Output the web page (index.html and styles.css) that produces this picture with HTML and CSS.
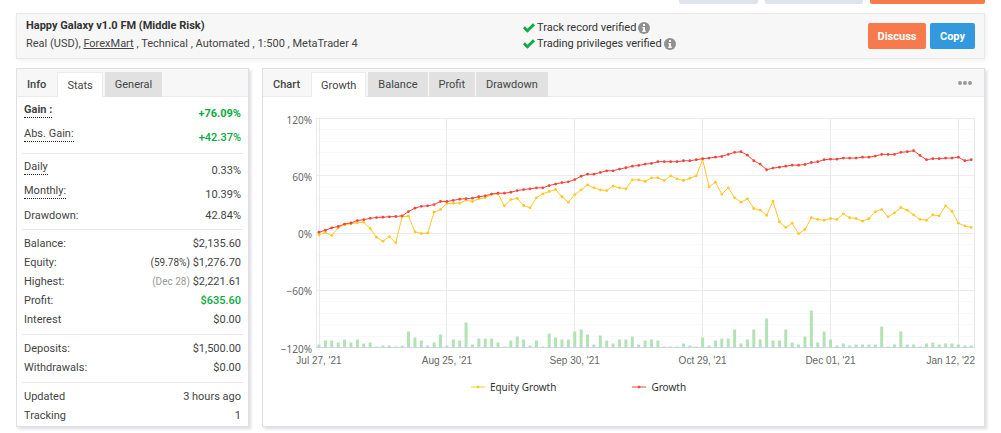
FILE: index.html
```html
<!DOCTYPE html>
<html lang="en">
<head>
<meta charset="utf-8">
<title>Happy Galaxy v1.0 FM (Middle Risk)</title>
<link rel="stylesheet" href="styles.css">
</head>
<body>
<div class="page">
  <div class="toolbar">
    <span class="tool tool-small"></span>
    <span class="tool tool-medium"></span>
    <span class="tool tool-large"></span>
  </div>

  <header class="summary">
    <div class="account">
      <h1 class="title">Happy Galaxy v1.0 FM (Middle Risk)</h1>
      <p class="details">Real (USD), <a class="broker" href="#">ForexMart</a> , Technical , Automated , 1:500 , MetaTrader 4</p>
    </div>
    <ul class="checks">
      <li class="check">
        <svg class="tick" viewBox="0 0 12 10"><path d="M0 5.3 1.9 3.3 4.4 5.8 10 .3 12 2.2 4.4 9.7z"/></svg>
        Track record verified
        <svg class="info" viewBox="0 0 12 12"><circle cx="6" cy="6" r="6"/><path d="M5 2h2v2H5zM4.3 5H7v3.6h.8V10H4.2V8.600H5V6.300h-.7z"/></svg>
      </li>
      <li class="check">
        <svg class="tick" viewBox="0 0 12 10"><path d="M0 5.3 1.9 3.3 4.4 5.8 10 .3 12 2.2 4.4 9.7z"/></svg>
        Trading privileges verified
        <svg class="info" viewBox="0 0 12 12"><circle cx="6" cy="6" r="6"/><path d="M5 2h2v2H5zM4.3 5H7v3.6h.8V10H4.2V8.600H5V6.300h-.7z"/></svg>
      </li>
    </ul>
    <div class="actions">
      <button class="button discuss" type="button">Discuss</button>
      <button class="button copy" type="button">Copy</button>
    </div>
  </header>

  <main class="panels">
    <section class="panel stats">
      <div class="tabs">
        <h2 class="tabs-title">Info</h2>
        <button class="tab active" type="button">Stats</button>
        <button class="tab" type="button">General</button>
      </div>
      <div class="groups">
        <dl class="group snug">
          <div class="row tall strong"><dt class="hint">Gain :</dt><dd class="gain">+76.09%</dd></div>
          <div class="row tall"><dt class="hint">Abs. Gain:</dt><dd class="gain">+42.37%</dd></div>
        </dl>
        <dl class="group snug">
          <div class="row tall"><dt class="hint">Daily</dt><dd>0.33%</dd></div>
          <div class="row tall"><dt class="hint">Monthly:</dt><dd>10.39%</dd></div>
          <div class="row"><dt>Drawdown:</dt><dd>42.84%</dd></div>
        </dl>
        <dl class="group">
          <div class="row"><dt>Balance:</dt><dd>$2,135.60</dd></div>
          <div class="row"><dt>Equity:</dt><dd><span class="share">(59.78%)</span> $1,276.70</dd></div>
          <div class="row"><dt>Highest:</dt><dd><span class="date">(Dec 28)</span> $2,221.61</dd></div>
          <div class="row"><dt>Profit:</dt><dd class="gain">$635.60</dd></div>
          <div class="row"><dt>Interest</dt><dd>$0.00</dd></div>
        </dl>
        <dl class="group">
          <div class="row"><dt>Deposits:</dt><dd>$1,500.00</dd></div>
          <div class="row"><dt>Withdrawals:</dt><dd>$0.00</dd></div>
        </dl>
        <dl class="group">
          <div class="row"><dt>Updated</dt><dd>3 hours ago</dd></div>
          <div class="row"><dt>Tracking</dt><dd>1</dd></div>
        </dl>
      </div>
    </section>

    <section class="panel chart">
      <div class="tabs">
        <h2 class="tabs-title">Chart</h2>
        <button class="tab active" type="button">Growth</button>
        <button class="tab" type="button">Balance</button>
        <button class="tab" type="button">Profit</button>
        <button class="tab" type="button">Drawdown</button>
        <button class="more" type="button"><svg class="dots" viewBox="0 0 14 4"><circle cx="2" cy="2" r="2"/><circle cx="7" cy="2" r="2"/><circle cx="12" cy="2" r="2"/></svg></button>
      </div>
      <svg class="plot" id="plot" viewBox="0 0 721 276"></svg>
      <div class="legend">
        <span class="key"><svg class="key-mark equity" viewBox="0 0 14 6"><path d="M0 3h14"/><circle cx="7" cy="3" r="1"/></svg>Equity Growth</span>
        <span class="key"><svg class="key-mark growth" viewBox="0 0 14 6"><path d="M0 3h14"/><circle cx="7" cy="3" r="1"/></svg>Growth</span>
      </div>
    </section>
  </main>
</div>
<script src="chart.js"></script>
</body>
</html>
```

FILE: styles.css
```css
* { box-sizing: border-box; }

body {
  margin: 0;
  background: #fff;
  color: #444;
  font-family: Roboto, "Liberation Sans", sans-serif;
  font-size: 11px;
}

h1, h2, p, ul, dl, dd { margin: 0; padding: 0; }

button { font: inherit; border: 0; padding: 0; cursor: pointer; }

.page { padding: 0 16px 6px; }

.toolbar { display: flex; justify-content: flex-end; gap: 7px; }
.tool { height: 4px; border-radius: 0 0 2px 2px; background: #dfe4ec; }
.tool-small { width: 79px; }
.tool-medium { width: 98px; }
.tool-large { width: 115px; background: #f67a4b; }

.summary {
  display: flex;
  align-items: center;
  margin-top: 9px;
  padding: 3px 9px;
  background: #f7f7f7;
  border: 1px solid #e9e9e9;
  box-shadow: 1px 1px 4px #eeeef2;
}
.account { flex: 0 0 497px; padding-bottom: 2px; }
.title { font-size: 11px; line-height: 18px; font-weight: 700; color: #333; }
.details { line-height: 18px; }
.broker { color: inherit; }

.checks { list-style: none; line-height: 16px; color: #333; }
.check { display: flex; align-items: center; gap: 2px; }
.tick { width: 12px; height: 10px; fill: #0aab40; }
.info { width: 12px; height: 12px; fill: #909090; }
.info path { fill: #f7f7f7; }

.actions { display: flex; gap: 4px; margin-left: auto; }
.button {
  height: 26px;
  border-radius: 2px;
  color: #fff;
  font-weight: 700;
}
.discuss { width: 58px; background: #f67a4b; }
.copy { width: 45px; background: #3399de; }

.panels { display: flex; gap: 13px; margin-top: 9px; }
.panel {
  background: #fff;
  border: 1px solid #e0e0e4;
  box-shadow: 2px 2px 3px #dcdce4;
}
.stats { flex: 0 0 233px; }
.chart { flex: 1; min-width: 0; }

.tabs {
  display: flex;
  align-items: flex-end;
  height: 28px;
  background: #f7f7f7;
  border-bottom: 1px solid #ebebeb;
}
.tabs-title {
  align-self: stretch;
  padding: 0 11px 0 10px;
  font-size: 11px;
  line-height: 31px;
  font-weight: 500;
}
.tab {
  height: 25px;
  margin-right: 1px;
  margin-bottom: -1px;
  padding: 0 10px;
  background: #e1e1e1;
  color: #444;
}
.tab.active {
  padding: 0 9px;
  margin-right: 2px;
  background: #fff;
  border: 1px solid #ebebeb;
  border-bottom: 0;
}
.more { align-self: center; display: flex; margin-left: auto; margin-right: 12px; background: none; }
.dots { width: 14px; height: 4px; fill: #9a9a9a; }

.groups { padding: 0 5px; }
.group { padding: 4px 2px 5px; }
.group.snug { padding-bottom: 4px; }
.group + .group { border-top: 1px solid #e9e9e9; }
.group:last-child { padding-bottom: 1px; }
.row {
  display: flex;
  justify-content: space-between;
  align-items: center;
  line-height: 19px;
}
.row.tall { height: 24px; }
.hint {
  align-self: flex-start;
  margin-top: 2px;
  line-height: 14px;
  border-bottom: 1px dotted #222;
}
.strong { font-weight: 700; }
.gain { color: #0aab40; }
.row:not(.strong) .gain { font-weight: 500; }
.share { font-size: 10px; }
.date { font-size: 10px; color: #999; }

.plot { display: block; width: 100%; }
.axis-y { font: 10px "Noto Sans", sans-serif; fill: #666; text-anchor: end; }
.axis-x { font: 10px "Liberation Sans", sans-serif; fill: #666; text-anchor: middle; }
.axis-x.last { text-anchor: end; }
.minor { stroke: #f8f8f8; }
.major { stroke: #ebebeb; }
.base { stroke: #ccd6eb; }
.bar { fill: #b3e2b5; }
.line { fill: none; stroke-width: 1; }
.line.growth { stroke: #f4453c; }
.line.equity { stroke: #ffc828; }
.dot.growth { fill: #f4453c; }
.dot.equity { fill: #ffc828; }

.legend {
  display: flex;
  justify-content: center;
  gap: 76px;
  margin-top: 6px;
  padding-right: 90px;
  font: 10px/16px "Noto Sans", sans-serif;
  color: #333;
}
.key { display: flex; align-items: center; gap: 5px; }
.key-mark { width: 14px; height: 6px; }
.key-mark.equity { stroke: #ffc828; fill: #ffc828; }
.key-mark.growth { stroke: #f4453c; fill: #f4453c; }
```

FILE: chart.js
```js
const growth = [
  0.8, 2.9, 5.4, 6.8, 9.4, 10.5, 13, 14, 15.4, 16.2, 16.6, 17, 17.3, 18, 22.5, 26, 28, 28.5, 29.8, 33,
  33, 34.2, 35.5, 36, 36.5, 38, 39, 40.8, 41.7, 41.7, 42.7, 44.5, 45.5, 46.3, 47.3, 47.3, 49.7, 51.3, 52.8, 53.6,
  56, 59.5, 61.6, 61.6, 63.5, 65.2, 65.2, 67, 68.4, 70, 70.8, 72.2, 72.9, 74.7, 74.7, 74.7, 74.7, 75.7, 75.7, 76.8,
  77.9, 78.5, 79.5, 80.3, 82.4, 84.5, 85.2, 81.6, 75.7, 72.2, 66.3, 68, 69, 70, 71.1, 71.1, 71.8, 73.9, 74.7, 76.8,
  77.4, 77.4, 78.5, 78.5, 78.5, 79.5, 79.5, 80.6, 82.4, 82.4, 82.4, 84.5, 85.2, 86.3, 81.3, 76.8, 77.9, 77.9, 78.5, 78.5,
  79.5, 75.7, 76.8
];

const equity = [
  -2, 0.5, -2.6, 5.4, 8.9, 9.6, 10.7, 11.3, 4.7, -4.4, -8.6, -3.7, -10.3, 17, 17.6, 1.3, -0.5, -0.2, 21.8, 24.6,
  31, 31.2, 31.2, 34.4, 33, 35.8, 36.9, 40.6, 41, 28.5, 35, 36.2, 28.8, 26.4, 36.9, 41, 43.5, 45.6, 38, 32.3,
  40.3, 45.2, 50.5, 47.3, 45.2, 44.5, 49.2, 47.3, 46.3, 55.7, 55.7, 54, 57.8, 57.8, 55, 59.9, 56.8, 55, 57.4, 59.9,
  76.8, 48.4, 53.2, 40.6, 47.3, 36.9, 32.3, 35.8, 25.7, 23.9, 18.6, 33.4, 11.7, 5.8, 10.3, -0.9, 3.7, 16, 14.2, 13.4,
  15.2, 14.2, 20.1, 16, 15.2, 12.4, 15.2, 22.2, 24.6, 17, 21.1, 26.7, 23.9, 19, 14.2, 13.4, 19, 18, 28.5, 22.8,
  10.3, 7.5, 5.8
];

const lots = [
  3, 7, 7, 5, 8, 5, 8, 4, 5, 1, 2, 2, 1, 2, 16, 10, 7, 2, 5, 13,
  2, 8, 7, 25, 3, 9, 9, 9, 5, 1, 7, 11, 8, 2, 7, 1, 14, 10, 8, 8,
  16, 18, 13, 3, 12, 7, 4, 8, 8, 11, 3, 7, 8, 7, 1, 1, 1, 4, 2, 1,
  10, 2, 7, 9, 9, 18, 4, 8, 18, 8, 29, 7, 7, 18, 5, 3, 11, 37, 5, 16,
  8, 2, 4, 2, 3, 3, 3, 3, 21, 1, 3, 16, 3, 3, 1, 4, 5, 3, 4, 4,
  3, 2, 2
];

const dates = ["Jul 27, '21", "Aug 25, '21", "Sep 30, '21", "Oct 29, '21", "Dec 01, '21", "Jan 12, '22"];

const area = { left: 53, right: 712, top: 21.5, bottom: 250.5 };
const x = i => 56 + i * 6.394;
const y = v => area.top + (120 - v) / 240 * (area.bottom - area.top);
const crisp = n => Math.floor(n) + 0.5;

function draw(name, attributes, text) {
  const node = document.createElementNS("http://www.w3.org/2000/svg", name);
  for (const key in attributes) node.setAttribute(key, attributes[key]);
  if (text) node.textContent = text;
  document.getElementById("plot").appendChild(node);
}

for (let v = -120; v <= 120; v += 12) {
  draw("path", { class: v % 60 ? "minor" : "major", d: `M${area.left} ${crisp(y(v))}H${area.right}` });
}
for (const at of [area.left + 0.5, area.right - 0.5]) {
  draw("path", { class: "major", d: `M${at} ${area.top}V${area.bottom}` });
}
dates.forEach((date, n) => {
  const at = x(n * 20);
  const last = n === dates.length - 1;
  draw("path", { class: "major", d: `M${crisp(at)} ${area.top}V${area.bottom}` });
  draw("text", { class: last ? "axis-x last" : "axis-x", x: last ? area.right : at, y: 267 }, date);
});
[120, 60, 0, -60, -120].forEach(v => {
  draw("text", { class: "axis-y", x: 49, y: y(v) + 5 }, String(v).replace("-", "\u2212") + "%");
});

lots.forEach((h, i) => draw("rect", { class: "bar", x: x(i) - 1.5, y: area.bottom - h, width: 3, height: h }));
draw("path", { class: "base", d: `M${area.left} ${area.bottom}H${area.right}` });

for (const [name, values] of [["equity", equity], ["growth", growth]]) {
  draw("polyline", { class: "line " + name, points: values.map((v, i) => x(i) + "," + y(v)).join(" ") });
  values.forEach((v, i) => draw("circle", { class: "dot " + name, cx: x(i), cy: y(v), r: 1.4 }));
}
```
